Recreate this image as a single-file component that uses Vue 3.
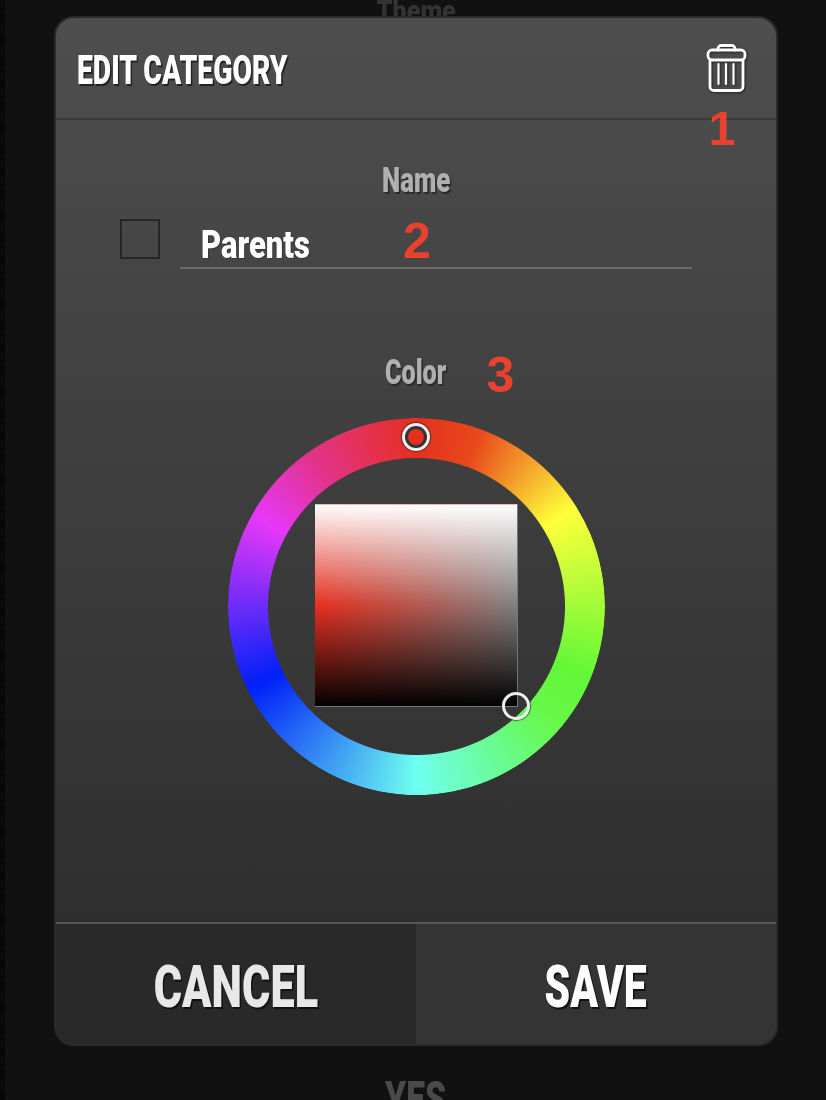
<template>
  <div class="page">
    <div class="edge"></div>
    <div class="behind behind-top"><span class="cond">Theme</span></div>
    <div class="modal">
      <div class="header">
        <div class="title"><span class="cond">EDIT CATEGORY</span></div>
        <svg class="trash" width="41" height="50" viewBox="0 0 41 50" fill="none" stroke="#fff" stroke-width="2.8" stroke-linecap="round" stroke-linejoin="round">
          <path d="M12 7V5.5a3 3 0 0 1 3-3h11a3 3 0 0 1 3 3V7" />
          <rect x="2" y="7" width="37" height="10" rx="4" />
          <path d="M4 17v26.5a4 4 0 0 0 4 4h25a4 4 0 0 0 4-4V17" />
          <path d="M12.5 21v20M20 21v20M27.5 21v20" stroke-width="2.2" />
        </svg>
        <span class="mark mark-1">1</span>
      </div>

      <div class="body">
        <div class="label"><span class="cond">Name</span></div>
        <div class="name-row">
          <div class="swatch"></div>
          <div class="name-input">
            <span class="name-text cond">Parents</span>
            <span class="mark mark-2">2</span>
          </div>
        </div>

        <div class="label color-label"><span class="cond">Color</span><span class="mark mark-3">3</span></div>

        <div class="picker">
          <div class="wheel"></div>
          <div class="square"></div>
          <div class="knob knob-hue"><i></i></div>
          <div class="knob knob-shade"></div>
        </div>
      </div>

      <div class="footer">
        <div class="btn cancel"><span class="cond">CANCEL</span></div>
        <div class="btn save"><span class="cond">SAVE</span></div>
      </div>
    </div>
    <div class="behind behind-bottom"><span class="cond">YES</span></div>
  </div>
</template>

<script setup>
</script>

<style>
html, body { background: #111; }
</style>

<style scoped>
.page {
  position: relative;
  width: 826px;
  height: 1100px;
  overflow: hidden;
  padding-top: 16px;
  box-sizing: border-box;
  background: #111;
  font-family: "Roboto", "Liberation Sans", sans-serif;
  font-weight: 900;
}
.cond { display: inline-block; white-space: nowrap; }
.edge {
  position: absolute;
  left: 0;
  top: 0;
  bottom: 0;
  width: 5px;
  background: repeating-linear-gradient(#0a0a0a 0 14px, #060606 14px 22px);
}
.behind {
  position: absolute;
  left: 0;
  width: 832px;
  text-align: center;
}
.behind-top { top: -6px; font-size: 30px; line-height: 34px; color: #333; }
.behind-top .cond { transform: scaleX(.84); }
.behind-bottom { top: 1075px; font-size: 48px; line-height: 48px; color: #4a4a4a; }
.behind-bottom .cond { transform: scaleX(.7); }
.modal {
  position: relative;
  width: 724px;
  height: 1030px;
  margin-left: 54px;
  display: flex;
  flex-direction: column;
  box-sizing: border-box;
  border: 2px solid #2a2a2a;
  border-radius: 20px;
  overflow: hidden;
  background: linear-gradient(#4e4e4e, #2a2a2a);
}
.header {
  position: relative;
  height: 102px;
  flex: none;
  display: flex;
  align-items: center;
  justify-content: space-between;
  box-sizing: border-box;
  padding: 0 29px 0 21px;
  border-bottom: 2px solid #3a3a3a;
}
.title {
  font-size: 41px;
  line-height: 46px;
  padding-top: 4px;
  color: #fff;
  text-shadow: 2px 2px 0 #222;
}
.title .cond { transform: scaleX(.69); transform-origin: left center; }
.trash { filter: drop-shadow(1px 1px 1px #222); }
.mark {
  position: absolute;
  font-family: "Liberation Sans", sans-serif;
  font-size: 50px;
  line-height: 1;
  font-weight: 700;
  color: #e8412d;
  text-shadow: none;
}
.mark-1 { right: 41px; top: 87px; font-size: 48px; }
.body {
  flex: 1;
  min-height: 0;
  display: flex;
  flex-direction: column;
  align-items: center;
}
.label {
  position: relative;
  margin-top: 44px;
  font-size: 35px;
  line-height: 34px;
  color: #b0b0b0;
  text-shadow: 2px 2px 0 #2a2a2a;
}
.label .cond { transform: scaleX(.74); }
.name-row {
  align-self: flex-start;
  display: flex;
  align-items: flex-end;
  gap: 20px;
  margin: 21px 0 0 64px;
}
.swatch {
  width: 40px;
  height: 40px;
  box-sizing: border-box;
  border: 2px solid #262626;
  margin-bottom: 10px;
}
.name-input {
  position: relative;
  width: 512px;
  height: 48px;
  box-sizing: border-box;
  padding-left: 21px;
  border-bottom: 2px solid #6a6a6a;
}
.name-text {
  font-size: 39px;
  line-height: 48px;
  color: #fff;
  text-shadow: 1px 1px 0 #333;
  transform: scaleX(.795);
  transform-origin: left center;
}
.mark-2 { left: 223px; top: -5px; }
.color-label { margin-top: 87px; }
.color-label .cond { transform: scaleX(.72); }
.mark-3 { left: 113px; top: -6px; }
.picker {
  position: relative;
  width: 377px;
  height: 377px;
  margin-top: 28px;
}
.wheel {
  width: 100%;
  height: 100%;
  border-radius: 50%;
  background: conic-gradient(#e62f1e, #e8491c 20deg, #ffff3a 58deg, #62f836 112deg, #66f84a 130deg, #6ffff0 180deg, #0020f8 244deg, #e638f8 299deg, #e2338a 325deg, #e62f1e 360deg);
  -webkit-mask: radial-gradient(circle, transparent 148px, #000 149px);
  mask: radial-gradient(circle, transparent 148px, #000 149px);
}
.square {
  position: absolute;
  left: 87px;
  top: 86px;
  width: 203px;
  height: 203px;
  background:
    linear-gradient(#fff, rgba(255, 255, 255, 0) 50%, rgba(0, 0, 0, 0) 50%, #000),
    linear-gradient(90deg, #e62f1e, #808080);
  box-shadow: inset -1px -1px 0 #777, inset 0 1px 0 #f0b8b0;
}
.knob {
  position: absolute;
  width: 28px;
  height: 28px;
  box-sizing: border-box;
  border: 3.5px solid #eee;
  border-radius: 50%;
  box-shadow: 0 0 1px 1px rgba(40, 40, 40, .7);
}
.knob-hue {
  left: 174px;
  top: 5px;
  display: flex;
  align-items: center;
  justify-content: center;
  background: #333;
}
.knob-hue i { width: 16px; height: 16px; border-radius: 50%; background: #e62f1e; }
.knob-shade { left: 274px; top: 274px; }
.footer {
  flex: none;
  height: 122px;
  box-sizing: border-box;
  display: flex;
  border-top: 2px solid #555;
}
.btn {
  flex: 1;
  display: flex;
  align-items: center;
  justify-content: center;
  padding-top: 4px;
  font-size: 60px;
  text-shadow: 2px 2px 0 #111;
}
.cancel { background: #292929; color: #e8e8e8; }
.cancel .cond { transform: scaleX(.722); }
.save { background: #343434; color: #fff; }
.save .cond { transform: scaleX(.684); }
</style>
